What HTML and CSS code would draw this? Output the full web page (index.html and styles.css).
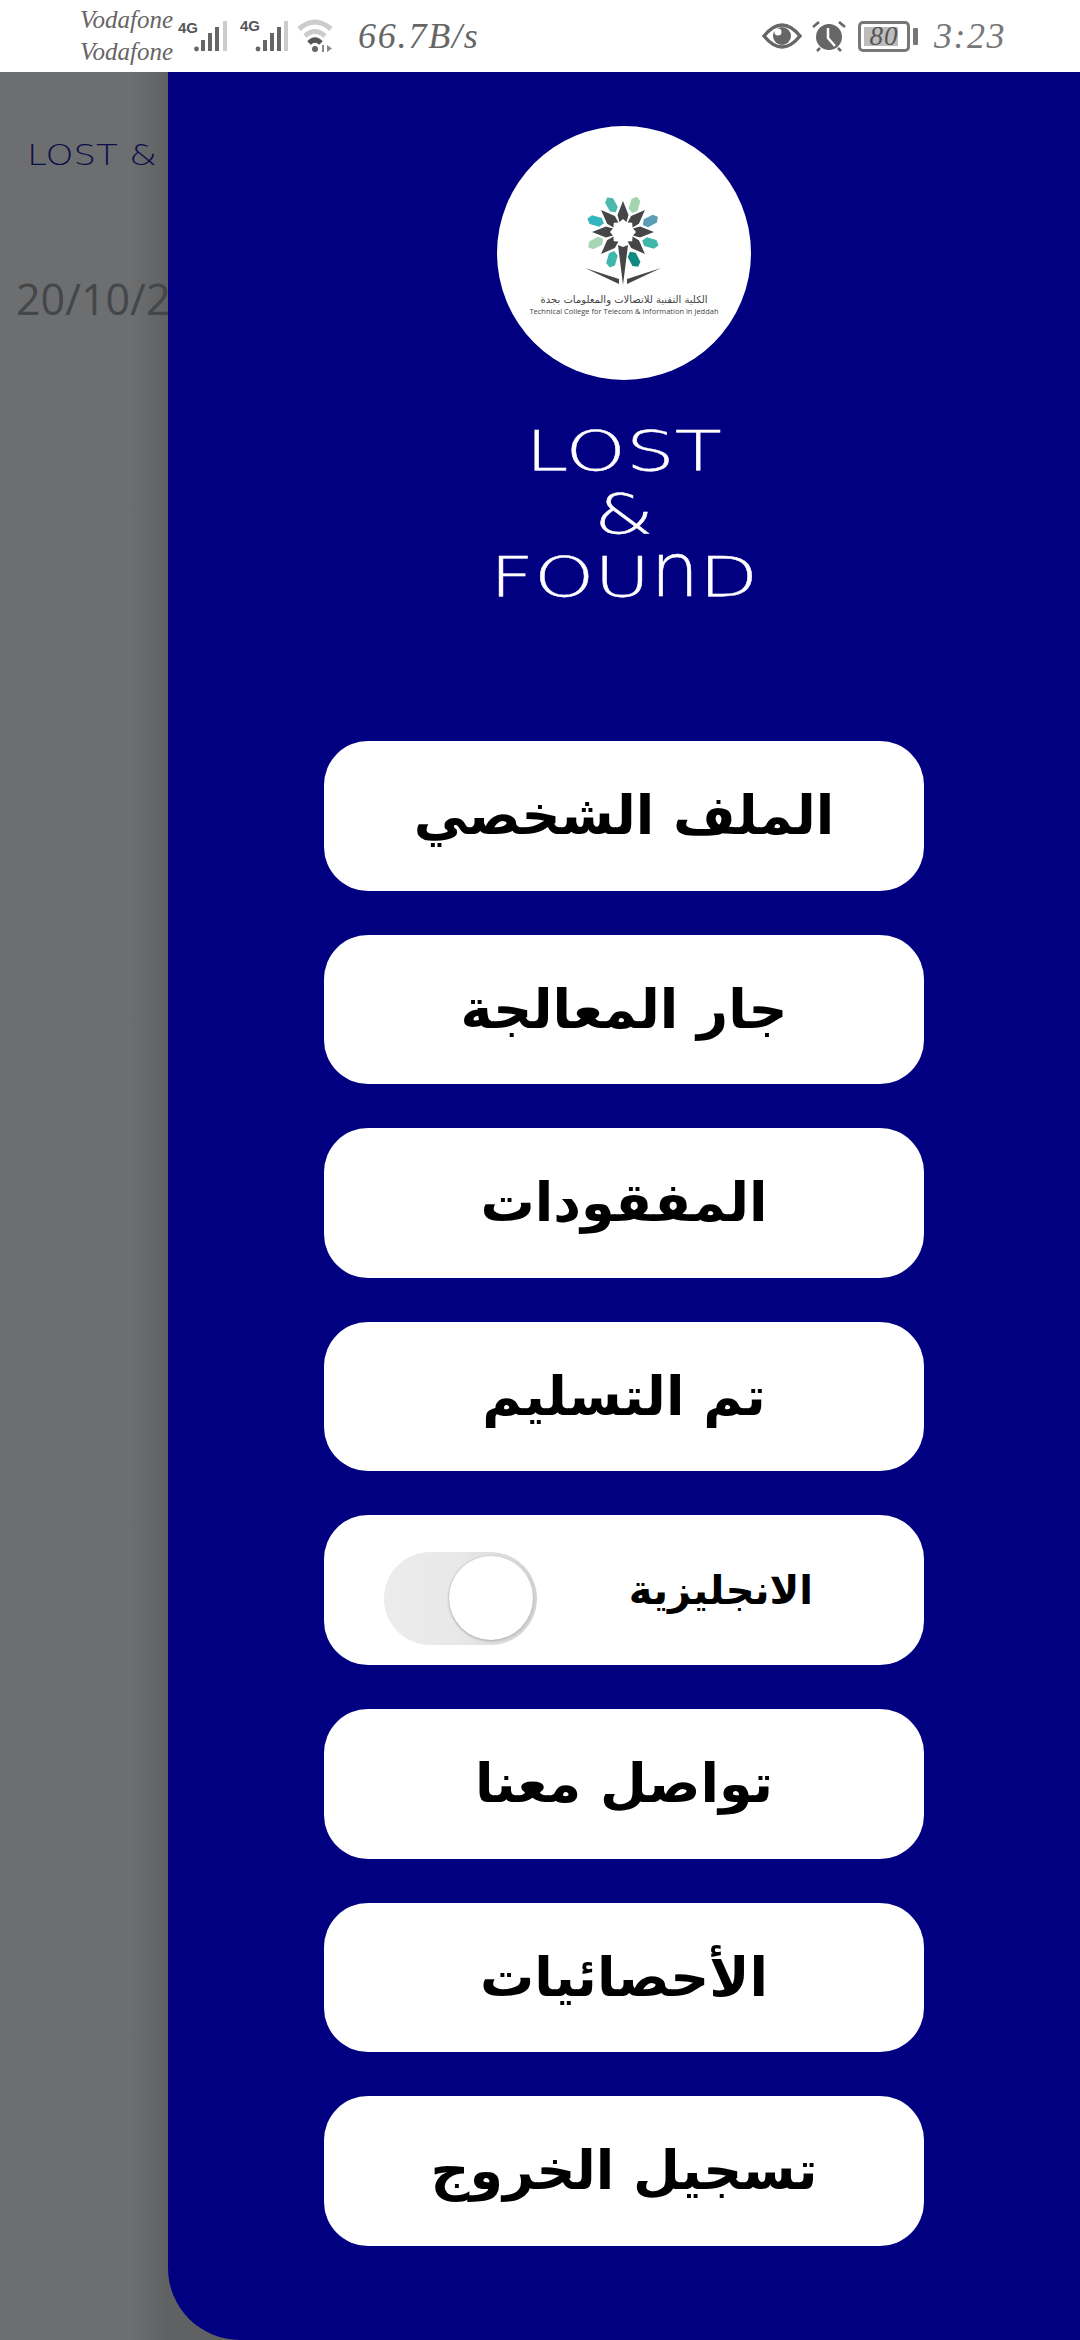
FILE: index.html
```html
<!DOCTYPE html>
<html lang="ar">
<head>
<meta charset="utf-8">
<title>Lost &amp; Found</title>
<link rel="stylesheet" href="styles.css">
</head>
<body>
<div class="screen">
  <header class="statusbar">
    <div class="status-left">
      <div class="carriers"><span>Vodafone</span><span>Vodafone</span></div>
      <svg class="signal" width="56" height="44" viewBox="0 0 56 44">
        <text x="0" y="19" class="net">4G</text>
        <circle cx="18.5" cy="35" r="2.4" fill="#666"/>
        <rect x="23" y="26" width="4" height="11" fill="#666"/>
        <rect x="30" y="19" width="4" height="18" fill="#666"/>
        <rect x="37" y="13" width="4" height="24" fill="#666"/>
        <rect x="45" y="7" width="4" height="30" fill="#ccc"/>
      </svg>
      <svg class="signal signal-b" width="56" height="44" viewBox="0 0 56 44">
        <text x="0" y="17" class="net">4G</text>
        <circle cx="18" cy="35" r="2.4" fill="#666"/>
        <rect x="23" y="26" width="4" height="11" fill="#666"/>
        <rect x="30" y="19" width="4" height="18" fill="#666"/>
        <rect x="37" y="13" width="4" height="24" fill="#666"/>
        <rect x="44" y="7" width="4" height="30" fill="#ccc"/>
      </svg>
      <svg class="wifi" width="42" height="36" viewBox="0 0 42 36">
        <path d="M1 11 Q17 -3 33 11" fill="none" stroke="#ccc" stroke-width="5"/>
        <path d="M7 18 Q17 9 27 18" fill="none" stroke="#ccc" stroke-width="5"/>
        <path d="M11 25 Q17 19 23 25" fill="none" stroke="#555" stroke-width="5"/>
        <circle cx="17" cy="31" r="3" fill="#666"/>
        <path d="M24 27h2v7h-2zM29 27l5 3.500-5 3.500z" fill="#888"/>
      </svg>
      <span class="speed">66.7B/s</span>
    </div>
    <div class="status-right">
      <svg class="eye" width="40" height="26" viewBox="0 0 40 26">
        <path d="M2 13 Q20 -9 38 13 Q20 35 2 13Z" fill="none" stroke="#666" stroke-width="3.500"/>
        <circle cx="20" cy="13" r="9" fill="#666"/>
        <circle cx="16" cy="9" r="3.500" fill="#fff"/>
      </svg>
      <svg class="alarm" width="34" height="32" viewBox="0 0 34 32">
        <circle cx="17" cy="17" r="13" fill="#666"/>
        <path d="M1 7l6-5M33 7l-6-5M5 31l3-3M29 31l-3-3" stroke="#666" stroke-width="2.600"/>
        <path d="M16 8v10l7 8" fill="none" stroke="#fff" stroke-width="2.500"/>
      </svg>
      <div class="battery"><div class="battery-body"><span class="battery-fill"></span><span class="battery-num">80</span></div><span class="battery-tip"></span></div>
      <span class="clock">3:23</span>
    </div>
  </header>

  <main class="stage">
    <div class="behind">
      <div class="behind-title">LOST &amp; FOUND</div>
      <div class="behind-date">20/10/2021</div>
    </div>

    <aside class="drawer">
      <div class="logo">
        <svg width="254" height="254" viewBox="0 0 254 254">
          <defs>
            <path id="petal" d="M-1 -38 L4 -35 L5 -25 L1 -21 L-4 -24 L-5 -34Z"/>
            <path id="spike" d="M0 -31 L5.500 -17 L3.500 -10 L0 -13 L-3.500 -10 L-5.500 -17Z"/>
          </defs>
          <g transform="translate(126 106)">
            <use href="#petal" transform="rotate(-23)" fill="#4db8ae"/>
            <use href="#petal" transform="rotate(23)" fill="#a3d4b0"/>
            <use href="#petal" transform="rotate(68)" fill="#5c9cb6"/>
            <use href="#petal" transform="rotate(112)" fill="#3fb6aa"/>
            <use href="#petal" transform="rotate(158)" fill="#0e8a80"/>
            <use href="#petal" transform="rotate(202)" fill="#3fb6ae"/>
            <use href="#petal" transform="rotate(248)" fill="#a6d6b6"/>
            <use href="#petal" transform="rotate(292)" fill="#34b6c0"/>
            <g fill="#454648">
              <use href="#spike"/>
              <use href="#spike" transform="rotate(45)"/>
              <use href="#spike" transform="rotate(90)"/>
              <use href="#spike" transform="rotate(135)"/>
              <path d="M-5 13 L0 53 L5 13 L0 15Z"/>
              <use href="#spike" transform="rotate(225)"/>
              <use href="#spike" transform="rotate(270)"/>
              <use href="#spike" transform="rotate(315)"/>
              <path d="M-38 36 L-4 47 L-4 52 Z"/>
              <path d="M38 36 L4 47 L4 52 Z"/>
            </g>
          </g>
          <text x="127" y="177" class="logo-ar" direction="rtl">الكلية التقنية للاتصالات والمعلومات بجدة</text>
          <text x="127" y="188" class="logo-en">Technical College for Telecom &amp; Information in Jeddah</text>
        </svg>
      </div>
      <h1 class="brand"><span>LOST</span><span>&amp;</span><span>FOU<i class="arch">n</i>D</span></h1>
      <nav class="menu">
        <a class="item">الملف الشخصي</a>
        <a class="item">جار المعالجة</a>
        <a class="item">المفقودات</a>
        <a class="item">تم التسليم</a>
        <div class="item item-toggle">
          <span class="toggle-label">الانجليزية</span>
          <span class="toggle"><span class="knob"></span></span>
        </div>
        <a class="item">تواصل معنا</a>
        <a class="item">الأحصائيات</a>
        <a class="item">تسجيل الخروج</a>
      </nav>
    </aside>
  </main>
</div>
</body>
</html>
```
FILE: styles.css
```css
* { box-sizing: border-box; }
html, body { margin: 0; padding: 0; }
body { width: 1080px; height: 2340px; overflow: hidden; background: #fff; font-family: "DejaVu Sans", sans-serif; }
.screen { width: 1080px; height: 2340px; display: flex; flex-direction: column; }

.statusbar { height: 72px; flex: none; background: #fff; display: flex; justify-content: space-between; align-items: center; padding: 0 74px 0 80px; direction: ltr; }
.status-left, .status-right { display: flex; align-items: center; }
.carriers { display: flex; flex-direction: column; font: italic 25px/32px "Liberation Serif", serif; color: #666; width: 98px; white-space: nowrap; }
.net { font: bold 15px "Liberation Sans Narrow", "Liberation Sans", sans-serif; fill: #555; }
.signal-b { margin-left: 6px; }
.wifi { margin-left: 2px; }
.speed { font: italic 36px "Liberation Serif", serif; color: #666; letter-spacing: 1.8px; margin-left: 18px; }
.alarm { margin-left: 10px; }
.battery { display: flex; align-items: center; gap: 3px; margin-left: 12px; }
.battery-body { position: relative; width: 52px; height: 31px; border: 3px solid #777; border-radius: 5px; display: flex; align-items: center; justify-content: center; }
.battery-fill { position: absolute; left: 3px; top: 3px; bottom: 3px; width: 34px; background: #bcbcbc; }
.battery-num { position: relative; font: italic 27px/25px "Liberation Serif", serif; color: #555; letter-spacing: 1px; }
.battery-tip { width: 5px; height: 17px; background: #777; border-radius: 1px; }
.clock { font: italic 36px "Liberation Serif", serif; color: #777; letter-spacing: 1.5px; margin-left: 16px; }

.stage { position: relative; flex: 1; background: linear-gradient(90deg, #6d6e70 0, #6d6e70 130px, #606162 168px); }
.behind { padding: 63px 0 0 27px; white-space: nowrap; }
.behind-title { font: 200 28px/42px "DejaVu Sans", sans-serif; color: #0b0f4a; width: fit-content; transform: scaleX(1.27); transform-origin: left; }
.behind-date { font: 43px/60px "Open Sans", sans-serif; color: #454647; margin: 92px 0 0 -11px; }

.drawer { position: absolute; top: 0; right: 0; bottom: 0; width: 912px; background: #000080; border-bottom-left-radius: 72px; display: flex; flex-direction: column; align-items: center; padding-top: 54px; }
.logo { width: 254px; height: 254px; border-radius: 50%; background: #fff; flex: none; }
.logo-ar { font: 10px "DejaVu Sans", sans-serif; fill: #444; text-anchor: middle; }
.logo-en { font: 7.5px "Open Sans", sans-serif; fill: #444; text-anchor: middle; }
.brand { margin: 39px 0 0; font: 200 56px/63px "DejaVu Sans", sans-serif; color: #fff; display: flex; flex-direction: column; align-items: center; -webkit-text-stroke: 0.4px #fff; }
.brand span { display: block; transform: scaleX(1.37); }
.arch { display: inline-block; font-style: normal; transform: scaleY(1.33); transform-origin: 50% 81%; }

.menu { display: flex; flex-direction: column; gap: 44px; margin-top: 133px; width: 600px; }
.item { height: 149.6px; background: #fff; border-radius: 44px; display: flex; align-items: center; justify-content: center; color: #000; font: bold 54px "DejaVu Sans", sans-serif; direction: rtl; }
.item-toggle { justify-content: space-between; padding: 0 111px 0 60px; }
.toggle-label { font: bold 40px "DejaVu Sans", sans-serif; }
.toggle { width: 153px; height: 93px; margin-top: 16px; border-radius: 47px; background: linear-gradient(90deg, #ececec 0, #e8e8e8 50%, #d4d4d4 100%); display: flex; align-items: center; justify-content: flex-end; padding-right: 4px; direction: ltr; }
.knob { width: 84px; height: 84px; border-radius: 50%; background: #fff; box-shadow: 0 1px 3px rgba(0,0,0,.25), 0 0 0 1px #ddd; }
```
